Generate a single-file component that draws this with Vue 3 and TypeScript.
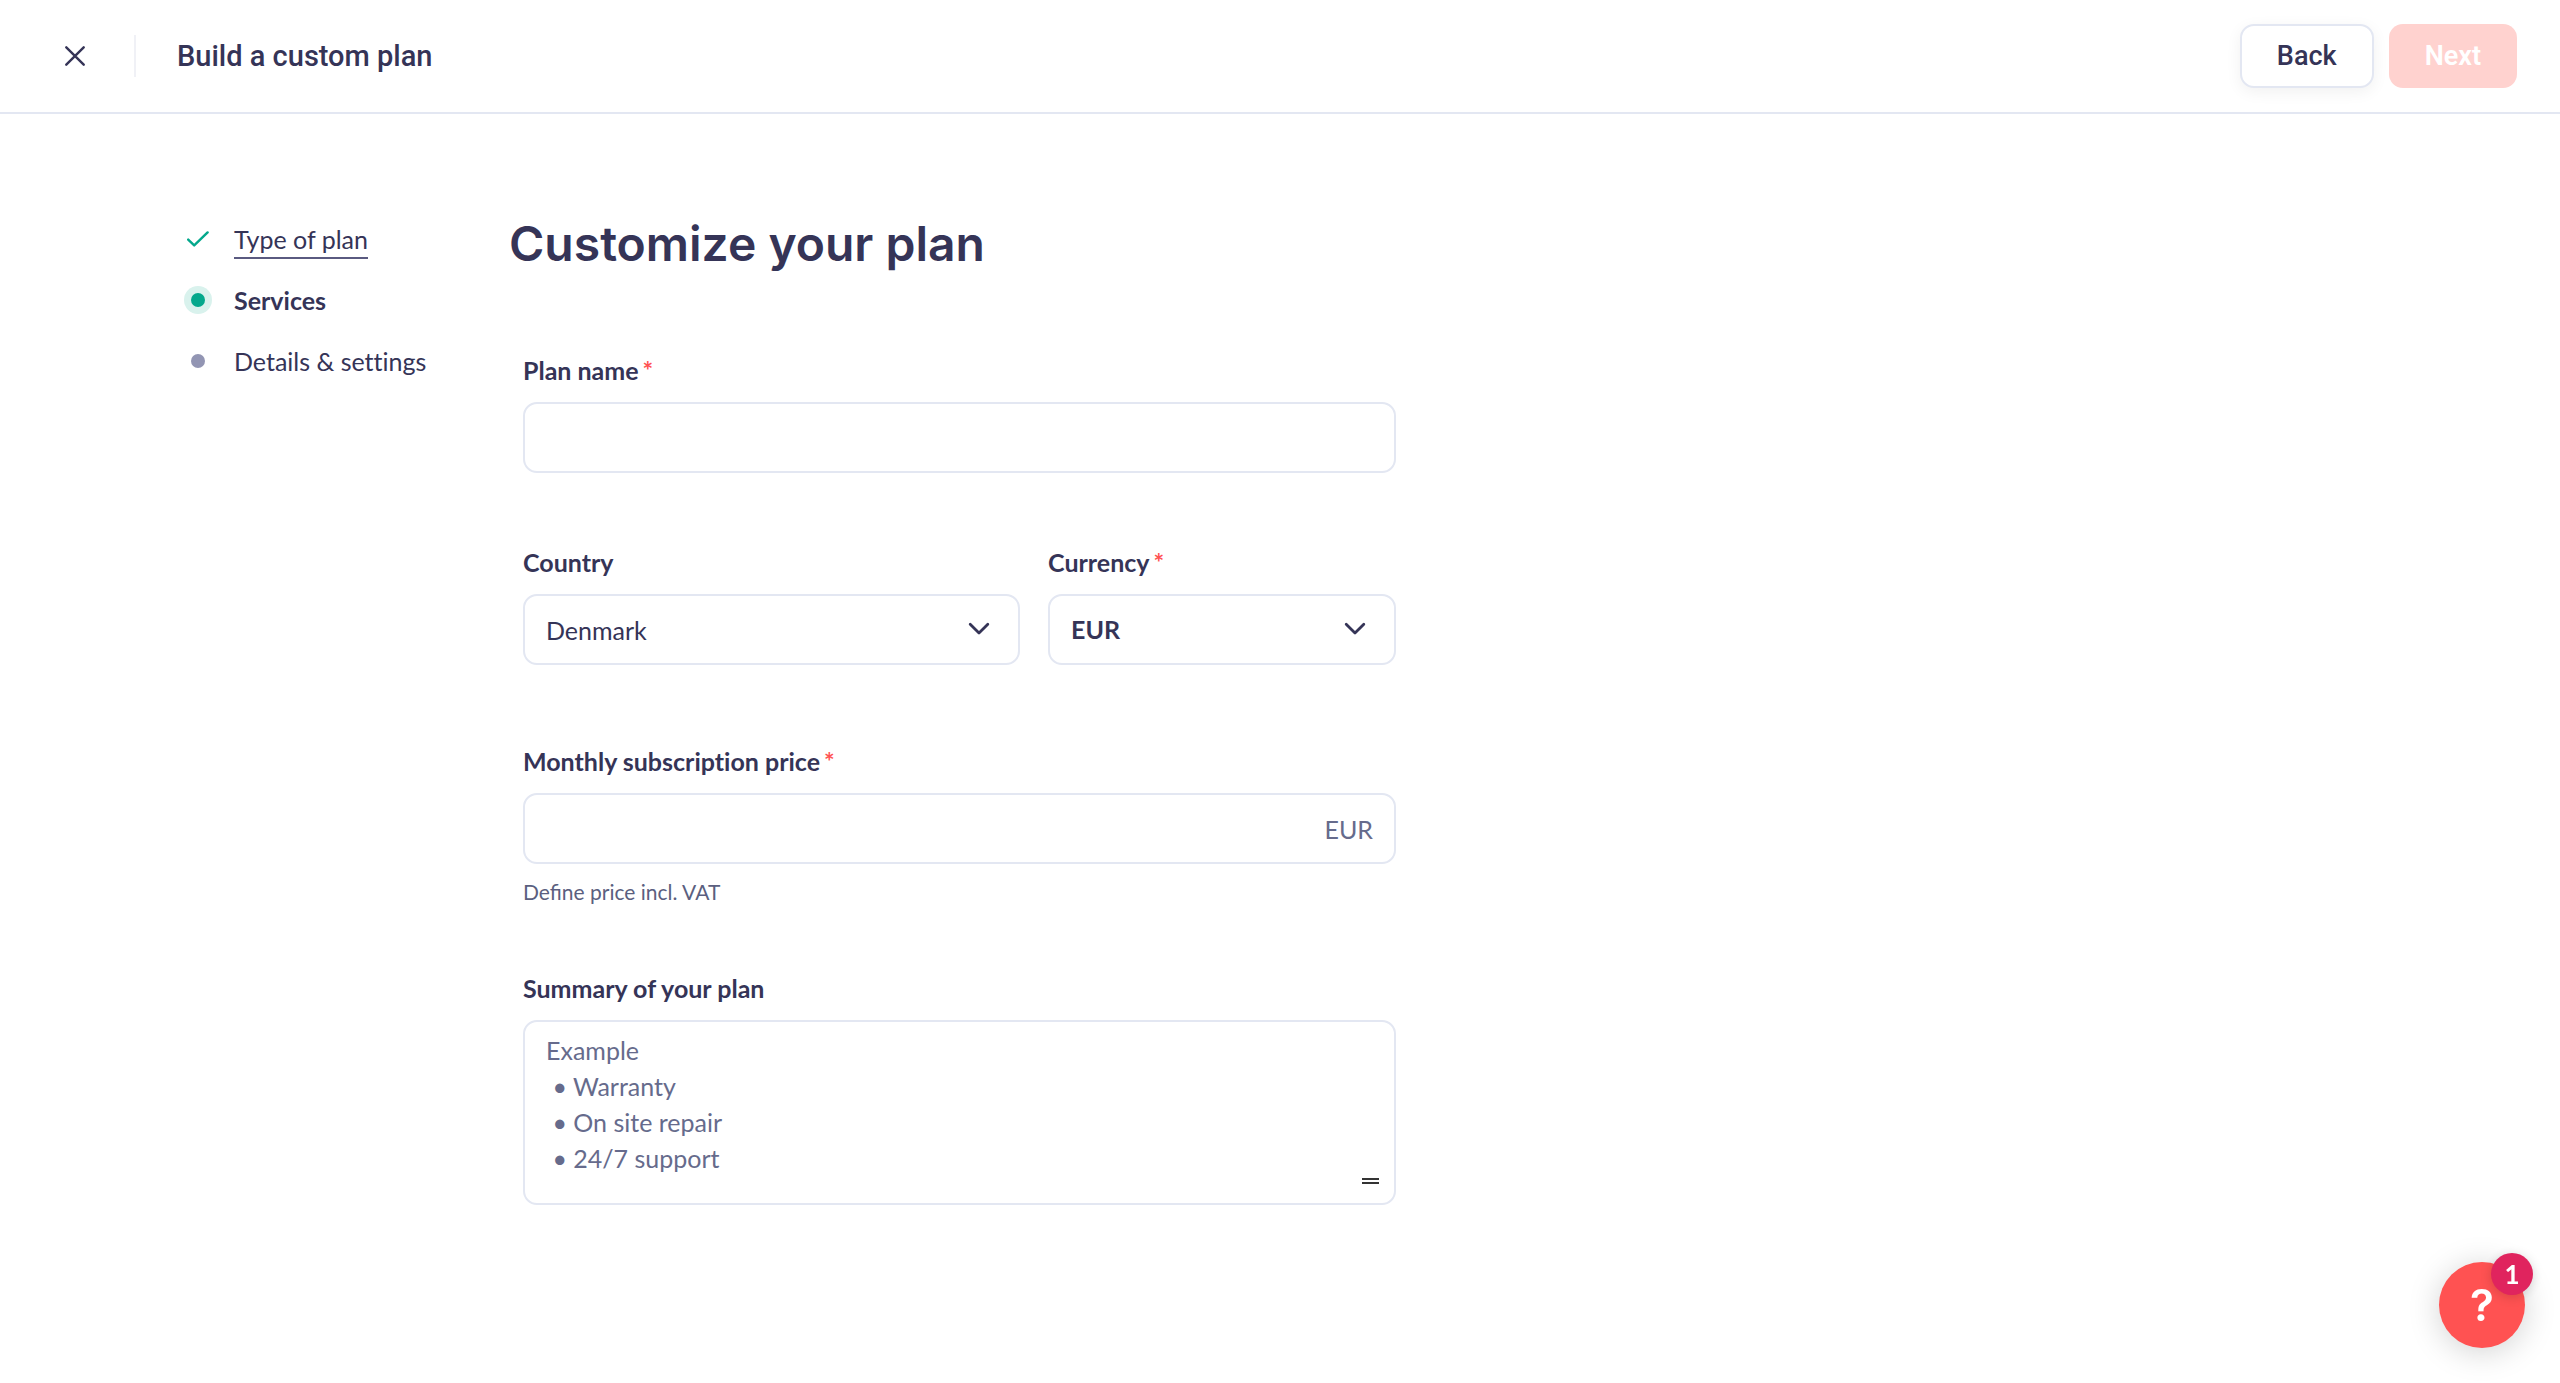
<script setup lang="ts">
import { ref } from 'vue'

type StepState = 'done' | 'current' | 'upcoming'

interface Step {
  label: string
  state: StepState
}

const steps: Step[] = [
  { label: 'Type of plan', state: 'done' },
  { label: 'Services', state: 'current' },
  { label: 'Details & settings', state: 'upcoming' },
]

const countries = ['Denmark', 'Germany', 'Sweden']
const currencies = ['EUR', 'DKK', 'SEK']

const planName = ref('')
const country = ref('Denmark')
const currency = ref('EUR')
const price = ref('')
const summary = ref('')
const unread = ref(1)

const summaryExample = 'Example\n • Warranty\n • On site repair\n • 24/7 support'
</script>

<template>
  <div class="page">
    <header class="topbar">
      <button class="close" type="button" aria-label="Close">
        <svg viewBox="0 0 20 20" width="20" height="20" fill="none" stroke="currentColor" stroke-width="2.4" stroke-linecap="round">
          <path d="M1.3 1.3 18.7 18.7M18.7 1.3 1.3 18.7" />
        </svg>
      </button>
      <span class="divider"></span>
      <span class="topbar-title">Build a custom plan</span>
      <div class="actions">
        <button class="btn btn-back" type="button">Back</button>
        <button class="btn btn-next" type="button" disabled>Next</button>
      </div>
    </header>

    <div class="layout">
      <nav class="steps" aria-label="Progress">
        <ol>
          <li v-for="step in steps" :key="step.label" class="step" :class="step.state">
            <span class="marker">
              <svg v-if="step.state === 'done'" viewBox="0 0 22 16" width="22" height="16" fill="none" stroke="currentColor" stroke-width="2.4" stroke-linecap="round" stroke-linejoin="round">
                <path d="M1.2 8.6 7.2 14.4 20.6 1.4" />
              </svg>
              <span v-else class="dot"></span>
            </span>
            <a v-if="step.state === 'done'" class="step-label" href="#">{{ step.label }}</a>
            <span v-else class="step-label">{{ step.label }}</span>
          </li>
        </ol>
      </nav>

      <main class="content">
        <h1>Customize your plan</h1>
        <form class="form" @submit.prevent>
          <div class="field">
            <label for="plan-name">Plan name<span class="req">*</span></label>
            <input id="plan-name" v-model="planName" class="control" type="text" />
          </div>

          <div class="row">
            <div class="country">
              <label for="country">Country</label>
              <div class="wrap">
                <select id="country" v-model="country" class="control">
                  <option v-for="c in countries" :key="c">{{ c }}</option>
                </select>
                <svg class="chevron" viewBox="0 0 22 14" width="22" height="14" fill="none" stroke="currentColor" stroke-width="2.8" stroke-linecap="round" stroke-linejoin="round">
                  <path d="M2.2 2.2 11 11 19.8 2.2" />
                </svg>
              </div>
            </div>
            <div class="currency">
              <label for="currency">Currency<span class="req">*</span></label>
              <div class="wrap">
                <select id="currency" v-model="currency" class="control strong">
                  <option v-for="c in currencies" :key="c">{{ c }}</option>
                </select>
                <svg class="chevron" viewBox="0 0 22 14" width="22" height="14" fill="none" stroke="currentColor" stroke-width="2.8" stroke-linecap="round" stroke-linejoin="round">
                  <path d="M2.2 2.2 11 11 19.8 2.2" />
                </svg>
              </div>
            </div>
          </div>

          <div class="field price">
            <label for="price">Monthly subscription price<span class="req">*</span></label>
            <div class="wrap">
              <input id="price" v-model="price" class="control" type="text" inputmode="decimal" aria-describedby="price-hint" />
              <span class="suffix">{{ currency }}</span>
            </div>
            <p id="price-hint" class="hint">Define price incl. VAT</p>
          </div>

          <div class="field">
            <label for="summary">Summary of your plan</label>
            <div class="wrap">
              <textarea id="summary" v-model="summary" class="control area" :placeholder="summaryExample"></textarea>
              <svg class="grip" viewBox="0 0 18 8" width="18" height="8" fill="none" stroke="#333" stroke-width="2">
                <path d="M0 2H17M0 6H17" />
              </svg>
            </div>
          </div>
        </form>
      </main>
    </div>

    <button class="help" type="button" aria-label="Help">
      ?
      <span class="badge">{{ unread }}</span>
    </button>
  </div>
</template>

<style>
body {
  margin: 0;
  background: #fff;
}
</style>

<style scoped>
.page {
  min-height: 100vh;
  box-sizing: border-box;
  color: #353457;
  font-family: Lato, "Liberation Sans", sans-serif;
  font-size: 25px;
  line-height: 36px;
  font-variant-ligatures: none;
}

.topbar {
  display: flex;
  align-items: center;
  height: 112px;
  padding: 0 43px 0 57px;
  border-bottom: 2px solid #e3e7f2;
  font-family: Roboto, "Liberation Sans", sans-serif;
}

.close {
  display: flex;
  align-items: center;
  justify-content: center;
  width: 36px;
  height: 36px;
  padding: 0;
  border: 0;
  background: none;
  color: inherit;
}

.divider {
  width: 2px;
  height: 42px;
  margin: 0 41px;
  background: #f0f1f6;
}

.topbar-title {
  font-size: 29px;
  font-weight: 500;
}

.actions {
  display: flex;
  gap: 15px;
  margin-left: auto;
}

.btn {
  box-sizing: border-box;
  height: 64px;
  padding: 0 36px;
  border: 0;
  border-radius: 14px;
  font-family: inherit;
  font-size: 27px;
  font-weight: 500;
}

.btn-back {
  padding: 0 35px;
  border: 2px solid #e3e7f2;
  background: #fff;
  color: #353457;
  box-shadow: 0 4px 16px rgba(0, 0, 0, 0.06);
}

.btn-next {
  background: #ffd2cf;
  color: #fff;
  font-weight: 600;
}

.layout {
  display: flex;
  padding: 96px 184px 80px;
}

.steps {
  flex: 0 0 325px;
}

.steps ol {
  display: flex;
  flex-direction: column;
  gap: 25px;
  margin: 0;
  padding: 11px 0 0;
  list-style: none;
}

.step {
  display: flex;
  align-items: center;
  gap: 22px;
}

.marker {
  display: flex;
  align-items: center;
  justify-content: center;
  width: 28px;
  height: 28px;
  border-radius: 50%;
  color: #04a88c;
}

.dot {
  width: 14px;
  height: 14px;
  border-radius: 50%;
  background: #9295b3;
}

.current .marker {
  background: #d9f2ed;
}

.current .dot {
  background: #04a88c;
}

.current .step-label {
  font-weight: 700;
}

.step-label {
  color: inherit;
  text-decoration: none;
}

.done .step-label {
  box-shadow: 0 2px 0 #5a5a80;
}

.content {
  flex: 0 1 887px;
}

h1 {
  margin: 0;
  font-family: Inter, "Liberation Sans", sans-serif;
  font-size: 48px;
  font-weight: 600;
  line-height: 68px;
}

.form {
  padding: 74px 0 0 14px;
}

.row {
  display: flex;
  gap: 28px;
  margin: 71px 0 78px;
}

.country {
  flex: 10 1 0;
}

.currency {
  flex: 7 1 0;
}

.price {
  margin-bottom: 62px;
}

label {
  display: block;
  margin-bottom: 14px;
  font-weight: 700;
}

.req {
  margin-left: 4px;
  color: #ff5252;
}

.wrap {
  position: relative;
}

.control {
  display: block;
  box-sizing: border-box;
  width: 100%;
  height: 71px;
  margin: 0;
  padding: 0 21px;
  border: 2px solid #e3e7f2;
  border-radius: 14px;
  outline: 0;
  appearance: none;
  background: #fff;
  color: #353457;
  font: inherit;
}

.strong {
  padding-bottom: 2px;
  font-weight: 700;
}

.chevron {
  position: absolute;
  top: 28px;
  right: 30px;
  pointer-events: none;
}

.suffix {
  position: absolute;
  top: 18px;
  right: 23px;
  color: #666b8c;
}

.hint {
  margin: 12px 0 0;
  color: #5b5f80;
  font-size: 21px;
  line-height: 32px;
  font-variant-ligatures: normal;
}

.area {
  height: 185px;
  padding: 10px 21px;
  resize: none;
}

.area::placeholder {
  color: #666b8c;
  opacity: 1;
}

.grip {
  position: absolute;
  right: 16px;
  bottom: 20px;
  pointer-events: none;
}

.help {
  position: fixed;
  right: 35px;
  bottom: 35px;
  width: 86px;
  height: 86px;
  padding: 0;
  border: 0;
  border-radius: 50%;
  background: #ff5252;
  color: #fff;
  font-family: Inter, sans-serif;
  font-size: 44px;
  font-weight: 600;
  box-shadow: 0 4px 32px rgba(0, 0, 0, 0.18);
}

.badge {
  position: absolute;
  top: -9px;
  right: -8px;
  width: 42px;
  height: 42px;
  border-radius: 50%;
  background: #e0245e;
  font-family: Lato, sans-serif;
  font-size: 26px;
  font-weight: 700;
  line-height: 42px;
  box-shadow: 0 2px 12px rgba(0, 0, 0, 0.16);
}
</style>
